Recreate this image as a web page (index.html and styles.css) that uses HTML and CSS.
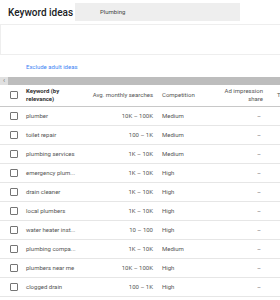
FILE: index.html
```html
<!DOCTYPE html>
<html lang="en">
<head>
    <meta charset="UTF-8">
    <title>Keyword ideas</title>
    <link rel="stylesheet" href="styles.css">
</head>
<body>
    <header class="top-bar">
        <h1>Keyword ideas</h1>
        <div class="search-box">Plumbing</div>
    </header>
    <div class="filter-panel"></div>
    <a class="exclude-link" href="#">Exclude adult ideas</a>
    <div class="scroll-bar"><span class="scroll-arrow">&lsaquo;</span></div>
    <table class="ideas">
        <thead>
            <tr>
                <th class="check"><span class="box"></span></th>
                <th class="kw">Keyword (by<br>relevance)</th>
                <th class="num">Avg. monthly searches</th>
                <th class="comp">Competition</th>
                <th class="share">Ad impression<br>share</th>
                <th class="more">T</th>
            </tr>
        </thead>
        <tbody id="rows"></tbody>
    </table>
    <script>
        const rows = [
            ['plumber', '10K – 100K', 'Medium'],
            ['toilet repair', '100 – 1K', 'Medium'],
            ['plumbing services', '1K – 10K', 'Medium'],
            ['emergency plum...', '1K – 10K', 'High'],
            ['drain cleaner', '1K – 10K', 'High'],
            ['local plumbers', '1K – 10K', 'High'],
            ['water heater inst...', '10 – 100', 'High'],
            ['plumbing compa...', '1K – 10K', 'Medium'],
            ['plumbers near me', '10K – 100K', 'High'],
            ['clogged drain', '100 – 1K', 'High']
        ];
        const tbody = document.getElementById('rows');
        rows.forEach(r => {
            const tr = document.createElement('tr');
            tr.innerHTML = `
                <td class="check"><span class="box"></span></td>
                <td class="kw">${r[0]}</td>
                <td class="num">${r[1]}</td>
                <td class="comp">${r[2]}</td>
                <td class="share">–</td>
                <td class="more"></td>
            `;
            tbody.appendChild(tr);
        });
    </script>
</body>
</html>
```

FILE: styles.css
```css
body {
    margin: 0;
    font-family: Roboto, "Liberation Sans", sans-serif;
    color: #3c4043;
    background: #fff;
    width: 280px;
    height: 300px;
    overflow: hidden;
}

.top-bar {
    display: flex;
    align-items: center;
    height: 24px;
    border-bottom: 1px solid #eeeeee;
    padding-left: 8px;
}

.top-bar h1 {
    margin: 0;
    font-size: 10px;
    font-weight: 500;
    color: #202124;
    width: 67px;
}

.search-box {
    width: 140px;
    height: 18px;
    background: #eeeeee;
    font-size: 6px;
    line-height: 18px;
    padding-left: 25px;
    color: #444;
}

.filter-panel {
    height: 29px;
    border-bottom: 1px solid #eeeeee;
    border-left: 1px solid #eeeeee;
}

.exclude-link {
    display: block;
    font-size: 6px;
    color: #4285f4;
    text-decoration: none;
    padding: 8px 0 0 26px;
    height: 14px;
}

.scroll-bar {
    height: 8px;
    background: #bdbdbd;
}

.scroll-arrow {
    display: block;
    width: 8px;
    height: 8px;
    background: #e0e0e0;
    font-size: 7px;
    line-height: 8px;
    color: #777;
    text-align: center;
}

.ideas {
    border-collapse: collapse;
    width: 283px;
    table-layout: fixed;
    font-size: 6px;
}

.ideas th,
.ideas td {
    box-sizing: border-box;
    padding: 0;
    color: #555;
}

.ideas th {
    font-weight: 400;
    height: 21px;
    border-bottom: 1px solid #c8c8c8;
    line-height: 8px;
}

.ideas td {
    height: 19px;
    border-bottom: 1px solid #e6e6e6;
    white-space: nowrap;
}

.ideas th.kw {
    font-weight: 700;
    color: #333;
}

.check {
    width: 26px;
}

.box {
    display: block;
    width: 6px;
    height: 6px;
    border: 1px solid #757575;
    border-radius: 1px;
    margin-left: 10px;
}

.kw {
    width: 60px;
    text-align: left;
}

.num {
    width: 67px;
    text-align: right;
}

.comp {
    width: 53px;
    text-align: left;
    padding-left: 9px !important;
}

.share {
    width: 57px;
    text-align: right;
}

td.share {
    padding-right: 2px !important;
}

.more {
    width: 20px;
    text-align: left;
    padding-left: 14px !important;
}
```
